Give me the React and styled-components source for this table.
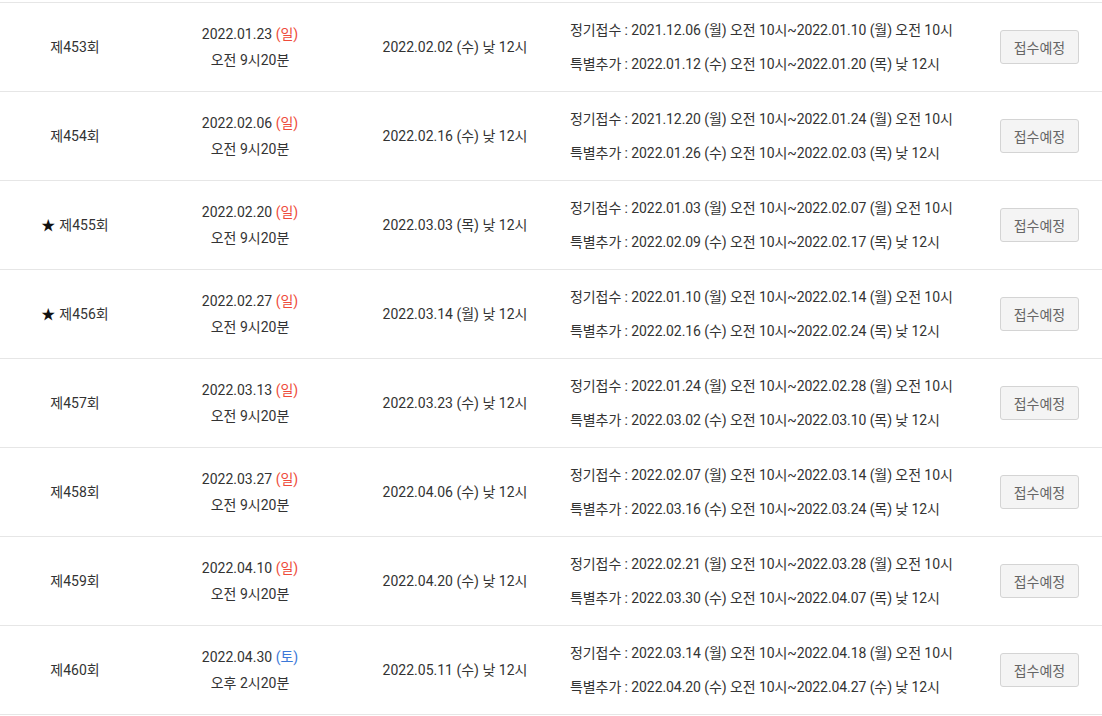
import styled, { createGlobalStyle } from "styled-components";

const GlobalStyle = createGlobalStyle`
  body {
    margin: 0;
    background: #fff;
    font-family: Roboto, "Noto Sans CJK KR", sans-serif;
    color: #333;
  }
`;

const rounds = [
  { no: "제453회", exam: "2022.01.23", day: "일", time: "오전 9시20분", result: "2022.02.02 (수) 낮 12시",
    regular: "2021.12.06 (월) 오전 10시~2022.01.10 (월) 오전 10시", extra: "2022.01.12 (수) 오전 10시~2022.01.20 (목) 낮 12시" },
  { no: "제454회", exam: "2022.02.06", day: "일", time: "오전 9시20분", result: "2022.02.16 (수) 낮 12시",
    regular: "2021.12.20 (월) 오전 10시~2022.01.24 (월) 오전 10시", extra: "2022.01.26 (수) 오전 10시~2022.02.03 (목) 낮 12시" },
  { no: "제455회", star: true, exam: "2022.02.20", day: "일", time: "오전 9시20분", result: "2022.03.03 (목) 낮 12시",
    regular: "2022.01.03 (월) 오전 10시~2022.02.07 (월) 오전 10시", extra: "2022.02.09 (수) 오전 10시~2022.02.17 (목) 낮 12시" },
  { no: "제456회", star: true, exam: "2022.02.27", day: "일", time: "오전 9시20분", result: "2022.03.14 (월) 낮 12시",
    regular: "2022.01.10 (월) 오전 10시~2022.02.14 (월) 오전 10시", extra: "2022.02.16 (수) 오전 10시~2022.02.24 (목) 낮 12시" },
  { no: "제457회", exam: "2022.03.13", day: "일", time: "오전 9시20분", result: "2022.03.23 (수) 낮 12시",
    regular: "2022.01.24 (월) 오전 10시~2022.02.28 (월) 오전 10시", extra: "2022.03.02 (수) 오전 10시~2022.03.10 (목) 낮 12시" },
  { no: "제458회", exam: "2022.03.27", day: "일", time: "오전 9시20분", result: "2022.04.06 (수) 낮 12시",
    regular: "2022.02.07 (월) 오전 10시~2022.03.14 (월) 오전 10시", extra: "2022.03.16 (수) 오전 10시~2022.03.24 (목) 낮 12시" },
  { no: "제459회", exam: "2022.04.10", day: "일", time: "오전 9시20분", result: "2022.04.20 (수) 낮 12시",
    regular: "2022.02.21 (월) 오전 10시~2022.03.28 (월) 오전 10시", extra: "2022.03.30 (수) 오전 10시~2022.04.07 (목) 낮 12시" },
  { no: "제460회", exam: "2022.04.30", day: "토", time: "오후 2시20분", result: "2022.05.11 (수) 낮 12시",
    regular: "2022.03.14 (월) 오전 10시~2022.04.18 (월) 오전 10시", extra: "2022.04.20 (수) 오전 10시~2022.04.27 (수) 낮 12시" },
];

export default function App() {
  return (
    <>
      <GlobalStyle />
      <Wrapper>
        <Table>
          <colgroup>
            <col width="150" />
            <col width="200" />
            <col width="210" />
            <col />
            <col width="125" />
          </colgroup>
          <tbody>
            {rounds.map((r) => (
              <Row key={r.no}>
                <Cell>{r.star && <Star>★</Star>}{r.no}</Cell>
                <Cell>
                  <Line>
                    {r.exam} <Day sat={r.day === "토"}>({r.day})</Day>
                  </Line>
                  <Line>{r.time}</Line>
                </Cell>
                <Cell>{r.result}</Cell>
                <PeriodCell>
                  <PeriodLine>정기접수 : {r.regular}</PeriodLine>
                  <PeriodLine>특별추가 : {r.extra}</PeriodLine>
                </PeriodCell>
                <Cell>
                  <StatusButton>접수예정</StatusButton>
                </Cell>
              </Row>
            ))}
          </tbody>
        </Table>
      </Wrapper>
    </>
  );
}

const Wrapper = styled.div`
  padding-top: 2px;
  width: 1102px;
`;

const Table = styled.table`
  width: 100%;
  border-collapse: collapse;
  table-layout: fixed;
  border-top: 1px solid #e6e6e6;
  font-size: 14px;
`;

const Row = styled.tr`
  height: 89px;
  border-bottom: 1px solid #e6e6e6;
`;

const Cell = styled.td`
  padding: 0;
  text-align: center;
  vertical-align: middle;
  line-height: 20px;
`;

const Star = styled.span`
  margin-right: 4px;
  color: #111;
`;

const Line = styled.div`
  line-height: 26px;
`;

const Day = styled.span`
  color: ${({ sat }) => (sat ? "#3b78d8" : "#ee4b3b")};
`;

const PeriodCell = styled.td`
  padding: 0 0 0 10px;
  text-align: left;
  vertical-align: middle;
`;

const PeriodLine = styled.div`
  line-height: 34px;
  white-space: nowrap;
  letter-spacing: -0.08px;
`;

const StatusButton = styled.button`
  width: 79px;
  height: 34px;
  border: 1px solid #d4d4d4;
  border-radius: 3px;
  background: #f4f4f4;
  color: #666;
  font-family: Roboto, "Noto Sans CJK KR", sans-serif;
  font-size: 14px;
  padding: 0;
  cursor: default;
`;
